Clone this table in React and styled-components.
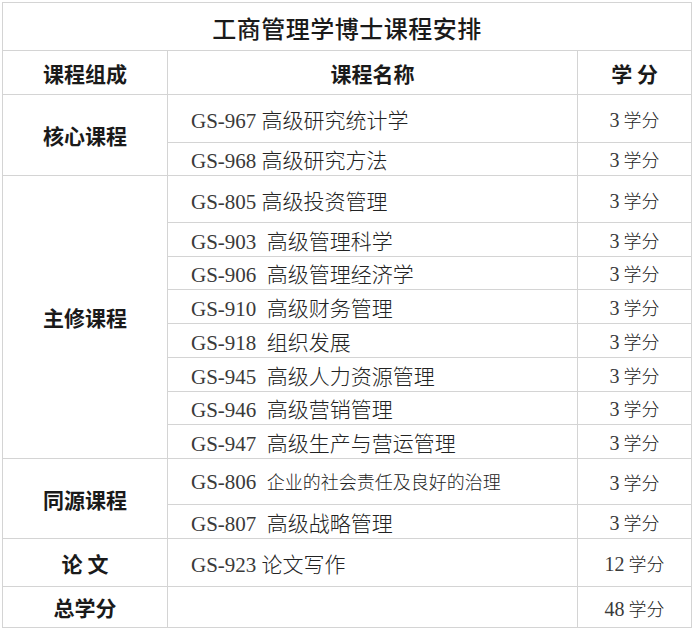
import React from "react";
import styled, { createGlobalStyle } from "styled-components";

const Global = createGlobalStyle`
  html, body { margin: 0; padding: 0; background: #ffffff; }
  body { font-family: "Liberation Serif", "Noto Sans CJK SC", serif; color: #1a1a1a; }
`;

const Page = styled.div`
  padding: 2px 0 0 2px;
`;

const Table = styled.table`
  border-collapse: collapse;
  table-layout: fixed;
  width: 689px;
  border: 1px solid #d4d4d4;
`;

const Col = styled.col``;

const Row = styled.tr`
  height: ${(p) => p.$h}px;
`;

const Cell = styled.td`
  border: 1px solid #d4d4d4;
  padding: 0;
  vertical-align: middle;
  box-sizing: border-box;
`;

const TitleCell = styled(Cell)`
  text-align: center;
  font-family: "Noto Sans CJK SC", sans-serif;
  font-weight: 500;
  font-size: 24px;
  letter-spacing: 0.5px;
  padding-top: 2px;
`;

const HeadCell = styled(Cell)`
  text-align: center;
  font-family: "Noto Sans CJK SC", sans-serif;
  font-weight: 700;
  font-size: 21px;
  white-space: pre;
`;

const GroupCell = styled(HeadCell)`
  padding-top: ${(p) => p.$pt || 0}px;
`;

const CourseCell = styled(Cell)`
  padding-left: 23px;
  white-space: pre;
  font-size: 21px;
  font-family: "Liberation Serif", "Noto Sans CJK SC", serif;
  padding-top: ${(p) => p.$pt || 0}px;
`;

const Code = styled.span`
  font-family: "Liberation Serif", serif;
  font-weight: 400;
  color: #3a3a3a;
`;

const Name = styled.span`
  font-family: "Noto Sans CJK SC", sans-serif;
  font-weight: 300;
  color: #222;
  font-size: ${(p) => p.$fs || 21}px;
`;

const CreditCell = styled(Cell)`
  text-align: center;
  font-size: 19px;
  padding-top: ${(p) => p.$pt || 0}px;
`;

const Num = styled.span`
  font-family: "Liberation Serif", serif;
  font-size: 20px;
  color: #3a3a3a;
`;

const Unit = styled.span`
  font-family: "Noto Sans CJK SC", sans-serif;
  font-weight: 300;
  font-size: 18px;
  color: #222;
`;

const groups = [
  {
    label: "核心课程",
    rows: [
      { code: "GS-967 ", name: "高级研究统计学", h: 48, pt: 0 },
      { code: "GS-968 ", name: "高级研究方法", h: 33 },
    ],
  },
  {
    label: "主修课程",
    rows: [
      { code: "GS-805 ", name: "高级投资管理", h: 47, pt: 1 },
      { code: "GS-903  ", name: "高级管理科学", h: 34 },
      { code: "GS-906  ", name: "高级管理经济学", h: 33 },
      { code: "GS-910  ", name: "高级财务管理", h: 34 },
      { code: "GS-918  ", name: "组织发展", h: 34 },
      { code: "GS-945  ", name: "高级人力资源管理", h: 34 },
      { code: "GS-946  ", name: "高级营销管理", h: 33 },
      { code: "GS-947  ", name: "高级生产与营运管理", h: 34 },
    ],
  },
  {
    label: "同源课程",
    rows: [
      { code: "GS-806  ", name: "企业的社会责任及良好的治理", h: 46, fs: 18, pt: 0 },
      { code: "GS-807  ", name: "高级战略管理", h: 34 },
    ],
  },
];

const Credit = ({ n, pt }) => (
  <CreditCell $pt={pt}>
    <Num>{n}</Num>
    <Unit> 学分</Unit>
  </CreditCell>
);

export default function App() {
  return (
    <Page>
      <Global />
      <Table>
        <colgroup>
          <Col style={{ width: 165 }} />
          <Col style={{ width: 410 }} />
          <Col style={{ width: 114 }} />
        </colgroup>
        <tbody>
          <Row $h={48}>
            <TitleCell colSpan={3}>工商管理学博士课程安排</TitleCell>
          </Row>
          <Row $h={44}>
            <HeadCell>课程组成</HeadCell>
            <HeadCell>课程名称</HeadCell>
            <HeadCell>学 分</HeadCell>
          </Row>
          {groups.map((g) =>
            g.rows.map((r, i) => (
              <Row $h={r.h} key={r.code}>
                {i === 0 && (
                  <GroupCell rowSpan={g.rows.length}>{g.label}</GroupCell>
                )}
                <CourseCell $pt={r.pt}>
                  <Code>{r.code}</Code>
                  <Name $fs={r.fs}>{r.name}</Name>
                </CourseCell>
                <Credit n="3" pt={r.pt} />
              </Row>
            ))
          )}
          <Row $h={48}>
            <GroupCell>论 文</GroupCell>
            <CourseCell>
              <Code>GS-923 </Code>
              <Name>论文写作</Name>
            </CourseCell>
            <Credit n="12" />
          </Row>
          <Row $h={41}>
            <GroupCell>总学分</GroupCell>
            <Cell />
            <Credit n="48" pt={2} />
          </Row>
        </tbody>
      </Table>
    </Page>
  );
}
